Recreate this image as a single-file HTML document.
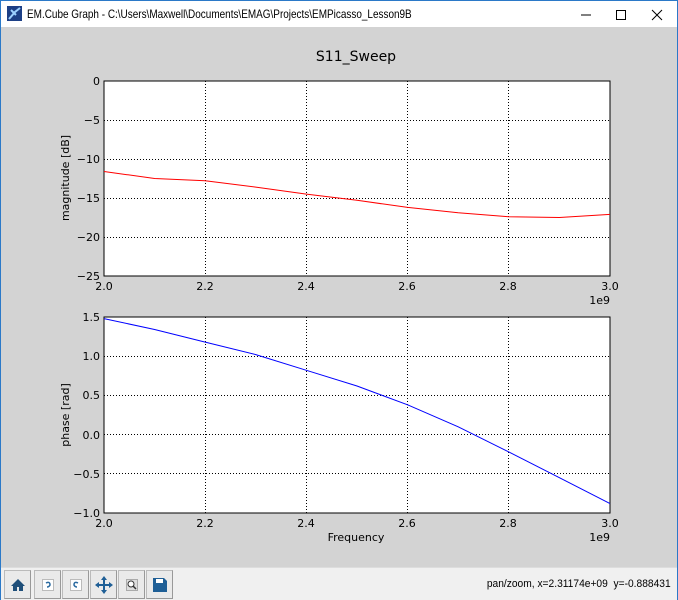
<!DOCTYPE html>
<html><head><meta charset="utf-8"><style>
html,body{margin:0;padding:0;width:678px;height:600px;overflow:hidden;background:#d3d3d3;font-family:"Liberation Sans",sans-serif}
#win{position:absolute;left:0;top:0;width:676px;height:598px;border:1px solid #2b79c8;background:#d3d3d3}
#title{position:absolute;left:0;top:0;width:676px;height:26px;background:#fff;font-size:12px;color:#000}
#title .t{position:absolute;left:26px;top:6px;display:inline-block;white-space:nowrap;transform:scaleX(0.83);transform-origin:0 0}
#tb{position:absolute;left:0;top:566px;width:676px;height:32px;background:#f0f0f0;border-top:1px solid #ddd}
.b{position:absolute;top:2px;width:25px;height:27px;background:#eaeaea;border:1px solid #bbb;border-right-color:#999;border-bottom-color:#999;display:flex;align-items:center;justify-content:center}
#st{position:absolute;right:6px;top:10px;font-size:11px;display:inline-block;white-space:nowrap;transform:scaleX(0.93);transform-origin:100% 0}
</style></head><body>
<div id="win">
<div id="title">
<svg style="position:absolute;left:6px;top:5px" width="15" height="15"><rect width="15" height="15" fill="#1c3f86"/><path d="M2 13 L8 6 L13 2 M4 4 L9 9" stroke="#9cd0ff" stroke-width="2" fill="none"/></svg>
<span class="t">EM.Cube Graph - C:\Users\Maxwell\Documents\EMAG\Projects\EMPicasso_Lesson9B</span>
<svg style="position:absolute;left:580px;top:8px" width="90" height="12"><line x1="0" y1="6" x2="10" y2="6" stroke="#000"/><rect x="35.5" y="1.5" width="9" height="9" fill="none" stroke="#000"/><path d="M71 1 L81 11 M81 1 L71 11" stroke="#000"/></svg>
</div>
<svg style="position:absolute;left:0;top:26px" width="676" height="540" font-family="DejaVu Sans, sans-serif" font-size="11">
<g transform="translate(0,-27)">
<text x="355" y="61" font-size="14" text-anchor="middle">S11_Sweep</text>
<rect x="103" y="81" width="506" height="195" fill="#fff" stroke="#000"/>
<rect x="103" y="317" width="506" height="196" fill="#fff" stroke="#000"/>
<g stroke="#000" stroke-dasharray="1,2" stroke-width="1">
<path d="M204.5 81V276M305.5 81V276M406.5 81V276M507.5 81V276M103 120.5H609M103 159.5H609M103 198.5H609M103 237.5H609"/>
<path d="M204.5 317V513M305.5 317V513M406.5 317V513M507.5 317V513M103 356.5H609M103 395.5H609M103 434.5H609M103 473.5H609"/>
</g>
<polyline fill="none" stroke="red" points="103,171.5 153.6,178.5 204.2,180.8 254.8,187.1 305.4,194.1 356,200.3 406.6,207.4 457.2,212.8 507.8,216.7 558.4,217.5 609,214.4"/>
<polyline fill="none" stroke="blue" points="103,318.6 153.6,329.5 204.2,342.1 254.8,354.6 305.4,370.3 356,386 406.6,404.8 457.2,426.8 507.8,451.9 558.4,477.7 609,503.6"/>
<g text-anchor="end">
<text x="99" y="85">0</text><text x="99" y="124">−5</text><text x="99" y="163">−10</text><text x="99" y="202">−15</text><text x="99" y="241">−20</text><text x="99" y="280">−25</text>
<text x="99" y="321">1.5</text><text x="99" y="360">1.0</text><text x="99" y="399">0.5</text><text x="99" y="439">0.0</text><text x="99" y="478">−0.5</text><text x="99" y="517">−1.0</text>
</g>
<g text-anchor="middle">
<text x="103" y="290">2.0</text><text x="204" y="290">2.2</text><text x="305" y="290">2.4</text><text x="406" y="290">2.6</text><text x="507" y="290">2.8</text><text x="609" y="290">3.0</text>
<text x="103" y="527">2.0</text><text x="204" y="527">2.2</text><text x="305" y="527">2.4</text><text x="406" y="527">2.6</text><text x="507" y="527">2.8</text><text x="609" y="527">3.0</text>
<text x="355" y="541">Frequency</text>
</g>
<text x="609" y="304" text-anchor="end">1e9</text>
<text x="609" y="541" text-anchor="end">1e9</text>
<text transform="translate(68,178) rotate(-90)" text-anchor="middle">magnitude [dB]</text>
<text transform="translate(68,415) rotate(-90)" text-anchor="middle">phase [rad]</text>
</g>
</svg>
<div id="tb">
<div class="b" style="left:3px"><svg width="16" height="14"><path d="M8 1L1 8H3V13H7V9H9V13H13V8H15Z" fill="#1f4f7a"/></svg></div>
<div class="b" style="left:33px"><svg width="12" height="12"><rect x="0.5" y="0.5" width="11" height="11" fill="#fff" stroke="#bbb"/><path d="M4 4Q8 2 8 6Q7 8 5 8" stroke="#2a6aa0" stroke-width="1.5" fill="none"/></svg></div>
<div class="b" style="left:61px"><svg width="12" height="12"><rect x="0.5" y="0.5" width="11" height="11" fill="#fff" stroke="#bbb"/><path d="M8 4Q4 2 4 6Q5 8 7 8" stroke="#2a6aa0" stroke-width="1.5" fill="none"/></svg></div>
<div class="b" style="left:89px"><svg width="18" height="18"><path d="M9 0L12 4H10V8H14V6L18 9L14 12V10H10V14H12L9 18L6 14H8V10H4V12L0 9L4 6V8H8V4H6Z" fill="#1f5f96"/></svg></div>
<div class="b" style="left:117px"><svg width="12" height="12"><rect x="0.5" y="0.5" width="11" height="11" fill="#ddd" stroke="#aaa"/><circle cx="5" cy="5" r="3" fill="#fff" stroke="#333"/><path d="M7 7L10 10" stroke="#333" stroke-width="1.5"/></svg></div>
<div class="b" style="left:145px"><svg width="14" height="14"><path d="M0 0H11L14 3V14H0Z" fill="#1f5f96"/><rect x="3" y="1" width="7" height="4" fill="#fff"/></svg></div>
<span id="st">pan/zoom, x=2.31174e+09&nbsp; y=-0.888431</span>
</div>
</div>
</body></html>
